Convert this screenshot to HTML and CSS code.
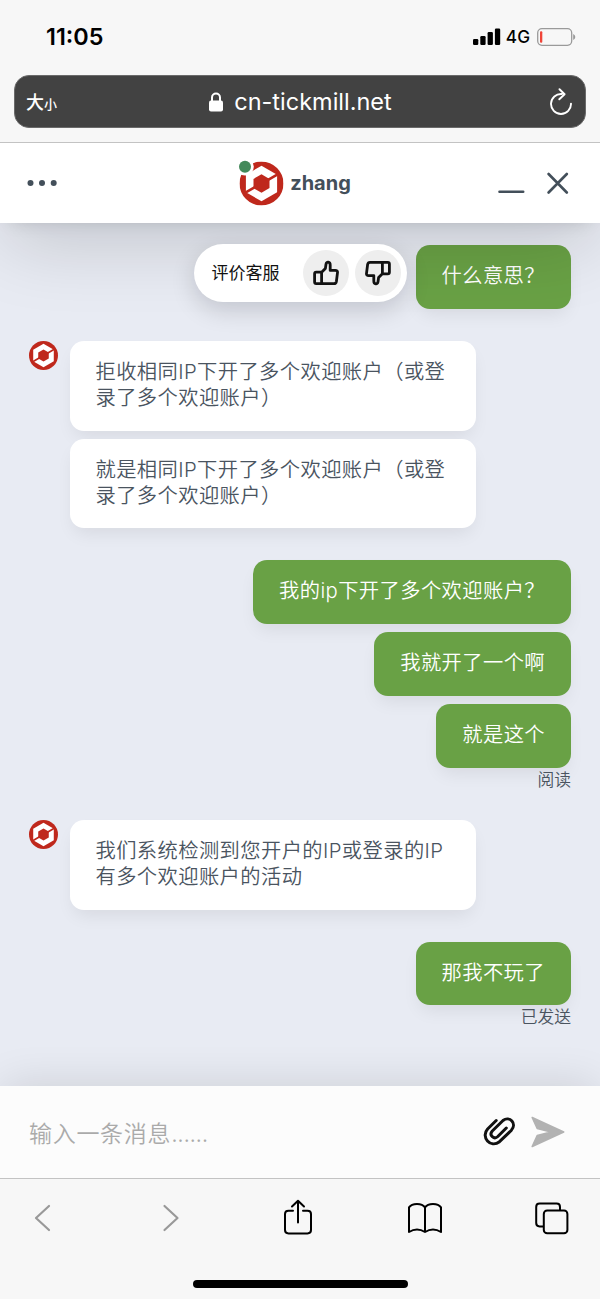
FILE: index.html
```html
<!DOCTYPE html>
<html lang="zh-CN">
<head>
<meta charset="utf-8">
<title>zhang</title>
<link rel="stylesheet" href="styles.css">
</head>
<body>
<svg width="0" height="0" class="defs">
  <symbol id="logo" viewBox="0 0 44 44">
    <circle cx="22" cy="22" r="22" fill="#bf281c"/>
    <path d="M22 4.3 37.6 13.2V30.8L22 39.7 6.4 30.8V13.2Z" fill="#fff"/>
    <path d="M22 12.8 30 17.4V26.6L22 31.2 14 26.6V17.4Z" fill="#bf281c"/>
    <path d="M26 19.8 39 12.3M18 24.2 5 31.7" stroke="#bf281c" stroke-width="2.6"/>
  </symbol>
  <symbol id="thumb" viewBox="0 0 26 26">
    <path d="M8.6 12.2 12.4 8.4 13 4.2C13.4 1.2 17.2 1.6 17.2 5V10.4H22.2C24 10.4 24.7 11.2 24.5 12.6L23.4 21.4C23.1 23 22.3 23.6 21 23.6H10.3Q8.6 23.6 8.6 21.8ZM8.6 12.2H3.2Q1.6 12.2 1.6 13.8V22Q1.6 23.6 3.2 23.6H10" fill="none" stroke="#111" stroke-width="2.8" stroke-linejoin="round" stroke-linecap="round"/>
  </symbol>
</svg>
<div class="status">
  <div class="time">11:05</div>
  <div class="signals">
    <svg width="28" height="18" viewBox="0 0 28 18"><rect x="0" y="11" width="5.3" height="6" rx="1.2"/><rect x="7.3" y="8" width="5.3" height="9" rx="1.2"/><rect x="14.6" y="4" width="5.3" height="13" rx="1.2"/><rect x="21.9" y="0.5" width="5.3" height="16.5" rx="1.2"/></svg>
    <span class="net">4G</span>
    <svg width="39" height="18" viewBox="0 0 39 18"><rect x=".7" y=".7" width="34" height="16.6" rx="4.2" fill="none" stroke="#9a9a9a" stroke-width="1.3"/><rect x="3" y="3.2" width="2.3" height="11.6" rx="1" fill="#f04438"/><path d="M36.2 6Q38.3 7 38.3 9T36.2 12Z" fill="#999"/></svg>
  </div>
</div>
<div class="urlwrap">
  <div class="urlbar">
    <span class="size">大<small>小</small></span>
    <span class="url"><svg width="14" height="20" viewBox="0 0 14 20"><rect y="8.5" width="14" height="11" rx="2" fill="#fff"/><path d="M3 9V5.5a4 4 0 0 1 8 0V9" fill="none" stroke="#fff" stroke-width="2"/></svg>cn-tickmill.net</span>
    <svg class="reload" width="24" height="28" viewBox="0 0 24 28"><path d="M12.8 6A10 10 0 1 0 22 15.6M10.5 1.2 15.6 6.2 10.3 11.3" fill="none" stroke="#fff" stroke-width="1.9" stroke-linecap="round" stroke-linejoin="round"/></svg>
  </div>
</div>
<header class="head">
  <svg class="dots" width="31" height="8" viewBox="0 0 31 8"><g fill="#434f5a"><circle cx="3.5" cy="4" r="3"/><circle cx="15" cy="4" r="3"/><circle cx="26.7" cy="4" r="3"/></g></svg>
  <div class="agent">
    <svg width="46" height="46" viewBox="-1.5 -1.5 46 46"><use href="#logo" width="44" height="44"/><circle cx="5.5" cy="5.3" r="8.8" fill="#fff"/><circle cx="5.5" cy="5.3" r="6" fill="#43895a"/></svg>
    <span>zhang</span>
  </div>
  <svg class="winctl" width="72" height="24" viewBox="0 0 72 24"><path d="M1.5 20.8H25.2M50.6 3 68.8 21.5M68.8 3 50.6 21.5" fill="none" stroke="#434f5a" stroke-width="2.6" stroke-linecap="round"/></svg>
</header>
<main class="chat">
  <div class="row out first">
    <div class="rate"><span>评价客服</span>
      <i><svg width="26" height="26"><use href="#thumb"/></svg></i>
      <i><svg class="down" width="26" height="26"><use href="#thumb"/></svg></i>
    </div>
    <p class="bubble">什么意思？</p>
  </div>
  <div class="row in">
    <svg class="avatar" width="29" height="29"><use href="#logo"/></svg>
    <div class="stack">
      <p class="bubble">拒收相同IP下开了多个欢迎账户（或登<br>录了多个欢迎账户）</p>
      <p class="bubble">就是相同IP下开了多个欢迎账户（或登<br>录了多个欢迎账户）</p>
    </div>
  </div>
  <div class="stack out">
    <p class="bubble">我的ip下开了多个欢迎账户？</p>
    <p class="bubble">我就开了一个啊</p>
    <p class="bubble">就是这个</p>
    <span class="state">阅读</span>
  </div>
  <div class="row in second">
    <svg class="avatar" width="29" height="29"><use href="#logo"/></svg>
    <div class="stack">
      <p class="bubble">我们系统检测到您开户的IP或登录的IP<br>有多个欢迎账户的活动</p>
    </div>
  </div>
  <div class="stack out">
    <p class="bubble">那我不玩了</p>
    <span class="state">已发送</span>
  </div>
</main>
<div class="composer">
  <span class="hint">输入一条消息<span class="ell">......</span></span>
  <svg width="32" height="30" viewBox="0 0 32 30"><path d="M13.2 3.5 4.6 12C-2.6 20 7.5 31.5 16.5 24.7L28.2 13.5C34.5 6.5 26.5-1.5 20 3.5L9.3 14C5.5 18.5 11.3 22.8 14.8 19.5L23.3 11" fill="none" stroke="#111" stroke-width="3" stroke-linecap="round" stroke-linejoin="round"/></svg>
  <svg class="send" width="34" height="32" viewBox="0 0 34 32"><path d="M1.2 1.5 32.7 16 1.2 30.5 6.2 19.6 20 16 6.2 12.4Z" fill="#b2b2b2" stroke="#b2b2b2" stroke-width="1.6" stroke-linejoin="round"/></svg>
</div>
<footer class="tools">
  <nav>
    <svg width="36" height="38" viewBox="0 0 36 38"><path d="M24 7 11 19 24 31" fill="none" stroke="#999" stroke-width="2.2" stroke-linecap="round" stroke-linejoin="round"/></svg>
    <svg width="36" height="38" viewBox="0 0 36 38"><path d="M12.5 7 25.5 19 12.5 31" fill="none" stroke="#999" stroke-width="2.2" stroke-linecap="round" stroke-linejoin="round"/></svg>
    <svg width="36" height="38" viewBox="0 0 36 38"><path d="M13 11.7H8.5Q5 11.7 5 15V31Q5 34.4 8.5 34.4H27.5Q31 34.4 31 31V15Q31 11.7 27.5 11.7H23M18 23.5V2.3M12 7.5 18 1.8 24 7.5" fill="none" stroke="#000" stroke-width="2" stroke-linecap="round" stroke-linejoin="round"/></svg>
    <svg width="36" height="38" viewBox="0 0 36 38"><path d="M18 8.4C15 3.8 5 3.8 2 8.4V33Q10 28 18 33Q26 28 34 33V8.4C31 3.8 21 3.8 18 8.4V33" fill="none" stroke="#000" stroke-width="2" stroke-linejoin="round"/></svg>
    <svg width="36" height="38" viewBox="0 0 36 38"><path d="M26 11.5V8Q26 4.6 22.6 4.6H5.6Q2.2 4.6 2.2 8V24Q2.2 27.4 5.6 27.4H9.8" fill="none" stroke="#000" stroke-width="2"/><rect x="9.8" y="11.5" width="23.6" height="22.8" rx="3.4" fill="none" stroke="#000" stroke-width="2"/></svg>
  </nav>
  <div class="home"></div>
</footer>
</body>
</html>
```
FILE: styles.css
```css
* { box-sizing: border-box; }
body { margin: 0; width: 600px; height: 1299px; overflow: hidden; display: flex; flex-direction: column; background: #f7f7f7; font-family: Inter, "Noto Sans CJK SC", sans-serif; }
svg { display: block; flex: none; }
.defs { position: absolute; }
.status { height: 75px; padding: 0 24px 2px 46px; display: flex; align-items: center; justify-content: space-between; }
.time { font-size: 23.4px; font-weight: 600; }
.signals { display: flex; align-items: center; }
.net { font-size: 17.2px; font-weight: 500; margin: 0 7px 0 5px; }
.urlwrap { height: 68px; padding: 0 14px; border-bottom: 1px solid #c3c3c3; }
.urlbar { height: 53px; border-radius: 15px; background: #424242; border: 1px solid #6a6a6a; color: #fff; display: grid; grid-template-columns: 1fr auto 1fr; align-items: center; padding: 0 12px 0 11px; }
.size { font-size: 18px; font-weight: 500; padding-bottom: 2px; }
.size small { font-size: 13px; }
.url { display: flex; align-items: center; gap: 11px; font-size: 23.5px; padding-left: 2px; }
.reload { justify-self: end; }
.head { height: 80px; flex: none; background: #fff; position: relative; z-index: 2; display: grid; grid-template-columns: 1fr auto 1fr; align-items: center; padding: 0 30px 1px 27px; box-shadow: 0 6px 18px -10px rgba(0,5,10,.2), 0 22px 76px -6px rgba(0,10,10,.18); clip-path: inset(0 0 -180px 0); }
.agent { display: flex; align-items: center; gap: 6px; font-size: 20px; font-weight: 700; color: #434f5a; margin-right: 8px; }
.winctl { justify-self: end; }
.chat { height: 863px; flex: none; padding: 22px 29px 0; background: #e8ebf3; color: #4a545f; }
.row { display: flex; }
.bubble { margin: 0; padding: 18px 26px 20px; border-radius: 14px; font-size: 20.3px; letter-spacing: .4px; line-height: 26px; font-weight: 350; box-shadow: 0 9px 18px -4px rgba(0,10,0,.08); white-space: nowrap; }
.in .bubble { background: #fff; width: 406px; height: 89.5px; }
.out .bubble { background: #69a145; color: #fff; height: 63.5px; }
.row.out { justify-content: flex-end; height: 64px; gap: 9px; }
.rate { height: 58px; width: 213px; margin-top: -1px; position: relative; z-index: 3; border-radius: 29px; background: #fff; box-shadow: 0 8px 24px rgba(0,6,20,.16); display: flex; align-items: center; padding-right: 6px; gap: 6px; font-size: 17px; color: #111; }
.rate span { margin: -4px auto 0 18px; }
.rate i { width: 46px; height: 46px; border-radius: 50%; background: #eee; display: grid; place-items: center; }
.down { transform: rotate(180deg); }
.in { margin: 32px 0; gap: 11.5px; }
.stack { display: flex; flex-direction: column; gap: 8.4px; }
.stack.out { align-items: flex-end; }
.state { font-size: 16.8px; line-height: 24px; margin-top: -8px; font-weight: 350; }
.in.second { margin: 28px 0 32px; }
.composer { height: 93px; flex: none; background: #fcfcfc; position: relative; border-bottom: 1px solid #c3c3c3; display: flex; align-items: center; padding: 0 35px 0 29px; box-shadow: 0 -5px 44px -4px rgba(0,10,10,.12); }
.hint { margin-right: auto; font-size: 23px; letter-spacing: .7px; font-weight: 350; color: #aaa; }
.ell { letter-spacing: -.4px; }
.send { margin-left: 16px; }
.tools { flex: 1; position: relative; background: #f7f7f7; }
.tools nav { display: flex; justify-content: space-between; padding: 20px 30px 0 25px; }
.home { width: 215px; height: 8px; border-radius: 4px; background: #000; margin: 43px auto 0; }
```
